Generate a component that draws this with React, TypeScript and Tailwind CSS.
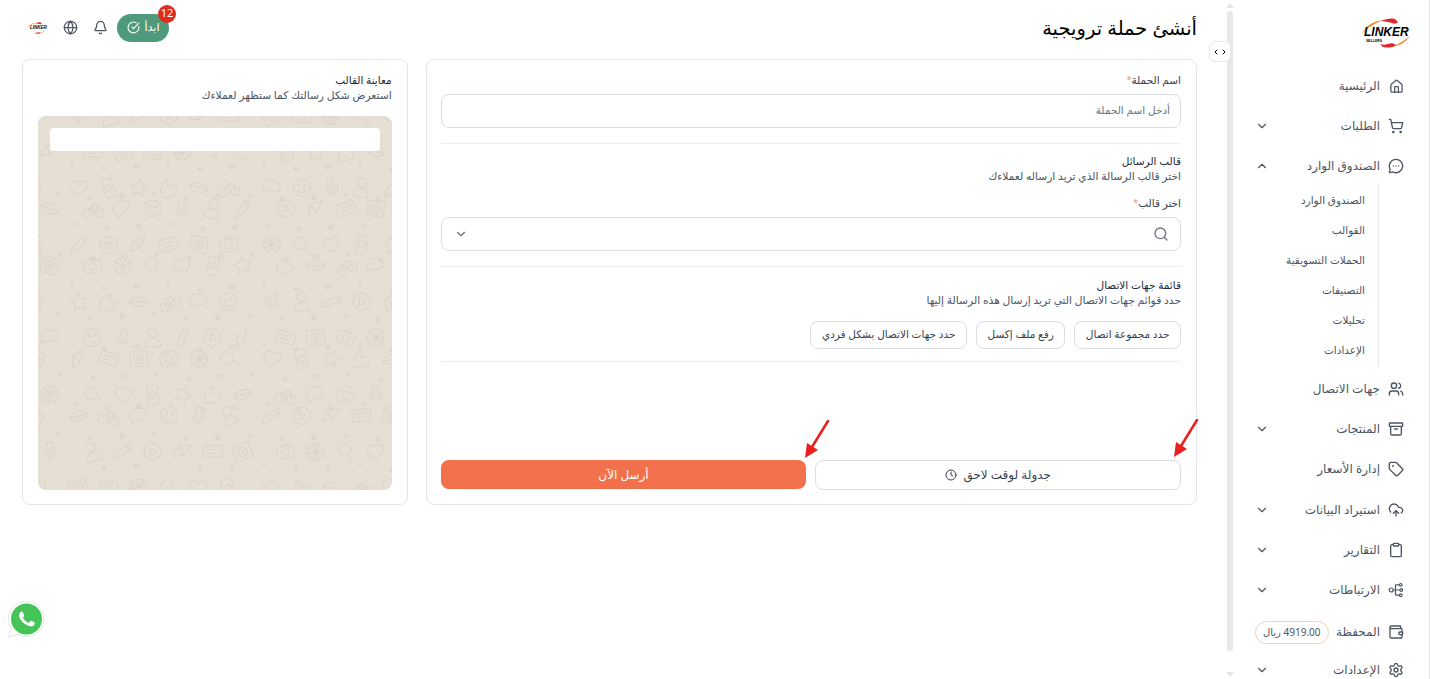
import React from 'react';
import {
  House, ShoppingCart, MessageCircleMore, Users, Archive, Tag, CloudUpload, Clipboard,
  Wallet, Settings, ChevronDown, ChevronUp, Bell, Globe, CircleCheckBig, Search, Clock,
  ChevronLeft, ChevronRight,
} from 'lucide-react';

const font = 'font-["Noto_Sans","DejaVu_Sans",sans-serif]';

// connections icon, lucide has nothing with this shape
const LinksIcon = () => (
  <svg width="16" height="16" viewBox="0 0 16 16" fill="none" stroke="currentColor" strokeWidth="1.2">
    <circle cx="3.2" cy="8" r="2" />
    <circle cx="12.8" cy="2.800" r="1.3" />
    <circle cx="13.300" cy="8" r="1.3" />
    <circle cx="12.8" cy="13.200" r="1.3" />
    <path d="M5.200 8h6.800M7.500 8V3.500c0-.5.3-.7.8-.7h3.200M7.500 8v4.500c0 .5.3.7.8.7h3.200" />
  </svg>
);

const Logo = ({ small }: { small?: boolean }) => (
  <div className={small ? 'relative h-[14px] w-[20px]' : 'relative h-[32px] w-[50px]'} dir="ltr">
    <svg className="absolute inset-0 h-full w-full" viewBox="0 0 50 32" fill="none">
      <path d="M1 16C6 8 14 3 24 3c-6 1-14 5-23 13z" fill="#f0872b" />
      <path d="M20 4c5-2 9-3 14-2l3 3c-2 2-4 2-6 1-4-1-7-2-11-2z" fill="#e0262f" />
      <path d="M49 19c-5 7-12 11-21 11 6-1 14-5 21-11z" fill="#f0872b" />
      <path d="M19 27c3 1 5 1 8 0 3-1 5-1 8 1-4 3-9 3-13 2z" fill="#e0262f" />
    </svg>
    {small ? (
      <span className='absolute top-[3px] left-[3px] font-["Liberation_Sans",sans-serif] text-[4.500px] leading-[7px] font-bold text-black italic'>LINKER</span>
    ) : (
      <>
        <span className='absolute top-[9px] left-[3px] font-["Liberation_Sans",sans-serif] text-[12px] leading-[13px] font-bold text-black italic'>LINKER</span>
        <span className='absolute top-[22px] left-[5px] font-["Liberation_Sans",sans-serif] text-[3.500px] leading-[4px] font-bold text-black'>SELLERS</span>
      </>
    )}
  </div>
);

type NavItem = { label: string; icon: React.ReactNode; chevron?: 'down' | 'up'; badge?: string; height?: string };

const topNav: NavItem[] = [
  { label: 'الرئيسية', icon: <House size={15} /> },
  { label: 'الطلبات', icon: <ShoppingCart size={16} />, chevron: 'down' },
  { label: 'الصندوق الوارد', icon: <MessageCircleMore size={16} />, chevron: 'up' },
];

const subNav = ['الصندوق الوارد', 'القوالب', 'الحملات التسويقية', 'التصنيفات', 'تحليلات', 'الإعدادات'];

const bottomNav: NavItem[] = [
  { label: 'جهات الاتصال', icon: <Users size={16} /> },
  { label: 'المنتجات', icon: <Archive size={16} />, chevron: 'down' },
  { label: 'إدارة الأسعار', icon: <Tag size={16} /> },
  { label: 'استيراد البيانات', icon: <CloudUpload size={16} />, chevron: 'down', height: 'h-[41px]' },
  { label: 'التقارير', icon: <Clipboard size={16} />, chevron: 'down' },
  { label: 'الارتباطات', icon: <LinksIcon />, chevron: 'down' },
  { label: 'المحفظة', icon: <Wallet size={16} />, badge: '4919.00 ريال', height: 'h-[44px]' },
  { label: 'الإعدادات', icon: <Settings size={16} />, chevron: 'down', height: 'h-[32px]' },
];

const NavRow = ({ item }: { item: NavItem }) => (
  <div className={`flex shrink-0 items-center text-[#4b5563] ${item.height ?? 'h-[40px]'}`}>
    <span className="flex w-[16px] justify-center">{item.icon}</span>
    <span className="mr-[8px] text-[12px] leading-none whitespace-nowrap">{item.label}</span>
    {item.badge && (
      <span className="mr-auto flex h-[23px] items-center rounded-full border border-[#f9cdb9] px-[7px] text-[10px] whitespace-nowrap">
        {item.badge}
      </span>
    )}
    {item.chevron === 'down' && <ChevronDown size={14} className="mr-auto" />}
    {item.chevron === 'up' && <ChevronUp size={14} className="mr-auto" />}
  </div>
);

const Sidebar = () => (
  <aside className="flex h-full w-[211px] shrink-0 border-r border-[#e5e7eb] bg-white">
    <div className="flex min-w-0 flex-1 flex-col overflow-hidden pr-[25px] pl-[15px]">
      <div className="mr-[-7px] flex h-[66px] shrink-0 items-center justify-start">
        <Logo />
      </div>
      {topNav.map((item) => <NavRow key={item.label} item={item} />)}
      <div className="mt-[-1px] mr-[25px] flex shrink-0 flex-col border-r border-[#e5e7eb] pt-[1px] pr-[13px]">
        {subNav.map((label) => (
          <div key={label} className="flex h-[30px] items-center text-[10.500px] whitespace-nowrap text-[#4b5563]">{label}</div>
        ))}
      </div>
      <div className="h-[3px] shrink-0" />
      {bottomNav.map((item) => <NavRow key={item.label} item={item} />)}
    </div>
    {/* the sidebar's own scrollbar */}
    <div className="flex w-[21px] shrink-0 flex-col items-center pt-[3px] pb-[2px]">
      <div className="h-0 w-0 border-x-[4px] border-b-[5px] border-x-transparent border-b-[#e5e5e5]" />
      <div className="mt-[3px] h-[640px] w-[6px] rounded-full bg-[#e8e8e8]" />
      <div className="mt-auto h-0 w-0 border-x-[4px] border-t-[5px] border-x-transparent border-t-[#e5e5e5]" />
    </div>
  </aside>
);

// doodles of the WhatsApp chat wallpaper, each drawn in a 30x30 box
const doodles: React.ReactNode[] = [
  <><circle cx="15" cy="15" r="11" /><circle cx="11" cy="12" r="1.200" /><circle cx="19" cy="12" r="1.200" /><path d="M10 19c3 3 7 3 10 0" /></>,
  <path d="M15 4l3.500 7 7.500 1-5.500 5 1.500 8-7-4-7 4 1.500-8L4 12l7.500-1z" />,
  <><rect x="4" y="8" width="22" height="16" rx="3" /><circle cx="15" cy="16" r="4.500" /><path d="M10 8l2-3h6l2 3" /></>,
  <path d="M4 26l3-8L21 4l5 5-14 14zM18 7l5 5" />,
  <><circle cx="8" cy="20" r="6" /><circle cx="23" cy="20" r="6" /><path d="M8 20l6-10h7l2 10M14 10l3 10" /></>,
  <path d="M4 11c0-6 8-7 11-2 3-5 11-4 11 2 0 6-6 10-11 14C10 21 4 17 4 11z" />,
  <><rect x="3" y="7" width="24" height="15" rx="2" /><path d="M8 12h14M8 17h10" /></>,
  <><rect x="11" y="3" width="8" height="15" rx="4" /><path d="M7 14c0 5 3 8 8 8s8-3 8-8M15 22v5" /></>,
  <path d="M5 26V14l8-10c2 0 3 2 2 5l-1 4h9c2 0 3 2 2 4l-3 7c0 1-2 2-3 2z" />,
  <><circle cx="15" cy="15" r="11" /><path d="M15 4v22M4 15h22M7 7l16 16M23 7L7 23" /></>,
  <><circle cx="15" cy="15" r="11" /><path d="M12 10l8 5-8 5z" /></>,
  <path d="M6 8c7-5 17-3 19 3s-6 9-12 9c-3 0-5 3-8 4 1-3 1-5 0-6-4-3-3-7 1-10z" />,
  <><rect x="8" y="3" width="14" height="24" rx="3" /><circle cx="15" cy="15" r="4" /></>,
  <><rect x="4" y="5" width="22" height="20" rx="2" /><circle cx="15" cy="15" r="6" /><circle cx="15" cy="15" r="2" /></>,
  <><circle cx="15" cy="9" r="6" /><path d="M5 27c0-7 4-11 10-11s10 4 10 11z" /></>,
  <path d="M3 15c5-8 19-8 24 0-5 8-19 8-24 0zM3 15h24" />,
  <><circle cx="13" cy="13" r="8" /><path d="M19 19l8 8" /></>,
  <path d="M5 25l3-15 15-6-6 15zM8 10l9 9" />,
];

const cells = Array.from({ length: 156 }, (_, i) => {
  const col = i % 12;
  const row = Math.floor(i / 12);
  // cheap fixed scatter, the same on every load
  const a = (i * 37 + row * 11) % 13;
  const b = (i * 53 + col * 7) % 15;
  return {
    glyph: doodles[(i * 7 + row * 5) % doodles.length],
    x: col * 32 + (row % 2) * 14 + a - 14,
    y: row * 30 + b - 12,
    rotate: ((i * 29) % 50) - 25,
    dotX: col * 32 + (row % 2) * 14 + 20 + (b % 6),
    dotY: row * 30 + 18 + (a % 7),
    dotR: 1 + (i % 3) * 0.5,
  };
});

const Wallpaper = () => (
  <svg className="absolute inset-0 h-full w-full" aria-hidden="true">
    <g fill="none" stroke="#dcd4c8" strokeWidth="1.400" strokeLinecap="round" strokeLinejoin="round">
      {cells.map((c, i) => (
        <g key={i}>
          <g transform={`translate(${c.x} ${c.y}) rotate(${c.rotate} 12 12) scale(0.78)`}>{c.glyph}</g>
          <circle cx={c.dotX} cy={c.dotY} r={c.dotR} />
        </g>
      ))}
    </g>
  </svg>
);

const Required = ({ children }: { children: React.ReactNode }) => (
  <label className="block text-[10.500px] leading-[14px] text-[#374151]">
    {children}<span className="align-top text-[9px] text-[#f58a7a]">*</span>
  </label>
);

const SectionTitle = ({ title, sub }: { title: string; sub: string }) => (
  <div>
    <div className="text-[10.500px] leading-[15px] font-medium text-[#1f2937]">{title}</div>
    <div className="text-[10.700px] leading-[15px] text-[#4b5563]">{sub}</div>
  </div>
);

const Form = () => (
  <section className="flex h-[446px] flex-col rounded-lg border border-[#e2e5ec] bg-white pt-[13px] pr-[15px] pl-[14px]">
    <Required>اسم الحملة</Required>
    <div className="mt-[7px] flex h-[34px] items-center rounded-lg border border-[#d9dde5] px-[10px] text-[10.500px] text-[#6b7280]">أدخل اسم الحملة</div>
    <div className="mt-[15px] border-t border-[#eceef2]" />
    <div className="mt-[10px]"><SectionTitle title="قالب الرسائل" sub="اختر قالب الرسالة الذي تريد ارساله لعملاءك" /></div>
    <div className="mt-[12px]"><Required>اختر قالب</Required></div>
    <div className="mt-[7px] flex h-[34px] items-center justify-between rounded-lg border border-[#d9dde5] pr-[11px] pl-[12px] text-[#6b7280]">
      <Search size={16} />
      <ChevronDown size={14} />
    </div>
    <div className="mt-[15px] border-t border-[#eceef2]" />
    <div className="mt-[11px]"><SectionTitle title="قائمة جهات الاتصال" sub="حدد قوائم جهات الاتصال التي تريد إرسال هذه الرسالة إليها" /></div>
    <div className="mt-[13px] flex gap-[9px]">
      {['حدد مجموعة اتصال', 'رفع ملف إكسل', 'حدد جهات الاتصال بشكل فردي'].map((label) => (
        <button key={label} className="h-[28px] rounded-lg border border-[#d9dde5] px-[10.500px] text-[10.500px] font-medium whitespace-nowrap text-[#374151]">{label}</button>
      ))}
    </div>
    <div className="mt-[12px] border-t border-[#eceef2]" />
    <div className="mt-auto mb-[14px] grid grid-cols-2 items-start gap-[9px]">
      <button className="flex h-[30px] items-center justify-center gap-[6px] rounded-lg border border-[#d9dde5] text-[12px] font-medium text-[#374151]">
        جدولة لوقت لاحق <Clock size={12} />
      </button>
      <button className="h-[29px] rounded-lg bg-[#f2704b] text-[12px] font-medium text-white">أرسل الآن</button>
    </div>
  </section>
);

const Preview = () => (
  <section className="flex h-[446px] flex-col rounded-lg border border-[#e2e5ec] bg-white px-[15px] pt-[13px] pb-[14px]">
    <SectionTitle title="معاينة القالب" sub="استعرض شكل رسالتك كما ستظهر لعملاءك" />
    <div className="relative mt-[13px] flex-1 overflow-hidden rounded-lg bg-[#e6dfd4] p-[12px]">
      <Wallpaper />
      <div className="relative h-[23px] rounded bg-white" />
    </div>
  </section>
);

const Topbar = () => (
  <header className="flex h-[59px] shrink-0 items-center justify-between pb-[4px]">
    <h1 className="text-[19.500px] font-medium text-black">أنشئ حملة ترويجية</h1>
    <div className="flex items-center text-[#4b5563]">
      <div className="relative flex h-[28px] w-[52px] items-center justify-center gap-[5px] rounded-full bg-[#4f9a7c] text-[11px] text-white">
        ابدأ <CircleCheckBig size={13} />
        <span className="absolute top-[-9px] right-[-7px] flex h-[18px] w-[18px] items-center justify-center rounded-full bg-[#e02b20] text-[11px] text-white">12</span>
      </div>
      <Bell size={15} className="mr-[9px]" />
      <Globe size={15} className="mr-[15px]" />
      <div className="mr-[16px] ml-[5px]"><Logo small /></div>
    </div>
  </header>
);

const Arrow = ({ className }: { className: string }) => (
  <svg className={className} width="26" height="40" viewBox="0 0 26 40" fill="none">
    <path d="M24 1L8 27" stroke="#e8201f" strokeWidth="2.500" strokeLinecap="round" />
    <path d="M1 38l2-15 11 7z" fill="#e8201f" />
  </svg>
);

const WhatsAppButton = () => (
  <svg className="absolute bottom-[40px] left-[7px]" width="39" height="39" viewBox="0 0 39 39">
    <path d="M19.500 1.500a17.500 17.500 0 0 1 0 35c-3.200 0-6-.8-8.500-2.200L1.500 37l2.800-8.500a17.500 17.500 0 0 1 15.200-27z" fill="#fff" stroke="#dfe9e4" />
    <circle cx="19.500" cy="19" r="15.500" fill="#45c458" />
    <g transform="translate(4.200 3.400) scale(1.300)">
      <path d="M17.472 14.382c-.297-.149-1.758-.867-2.030-.967-.273-.099-.471-.148-.670.150-.197.297-.767.966-.940 1.164-.173.199-.347.223-.644.075-.297-.150-1.255-.463-2.390-1.475-.883-.788-1.480-1.761-1.653-2.059-.173-.297-.018-.458.130-.606.134-.133.298-.347.446-.520.149-.174.198-.298.298-.497.099-.198.050-.371-.025-.520-.075-.149-.669-1.612-.916-2.207-.242-.579-.487-.500-.669-.510-.173-.008-.371-.010-.570-.010-.198 0-.520.074-.792.372-.272.297-1.040 1.016-1.040 2.479 0 1.462 1.065 2.875 1.213 3.074.149.198 2.096 3.200 5.077 4.487.709.306 1.262.489 1.694.625.712.227 1.360.195 1.871.118.571-.085 1.758-.719 2.006-1.413.248-.694.248-1.289.173-1.413-.074-.124-.272-.198-.570-.347" fill="#fff" />
    </g>
  </svg>
);

const App = () => (
  <div dir="rtl" className={`relative flex h-[679px] w-[1430px] overflow-hidden bg-white ${font}`}>
    <Sidebar />
    <main className="flex min-w-0 flex-1 flex-col px-[22px]">
      <Topbar />
      <div className="grid grid-cols-[2fr_1fr] gap-[18px]">
        <Form />
        <Preview />
      </div>
    </main>
    {/* sidebar collapse toggle */}
    <div className="absolute top-[41px] left-[1209px] flex h-[21px] w-[22px] items-center justify-center rounded-md border border-[#e5e7eb] bg-white text-black" dir="ltr">
      <ChevronLeft size={8} strokeWidth={3} />
      <ChevronRight size={8} strokeWidth={3} />
    </div>
    <Arrow className="absolute top-[420px] left-[804px]" />
    <Arrow className="absolute top-[419px] left-[1173px]" />
    <WhatsAppButton />
  </div>
);

export default App;
